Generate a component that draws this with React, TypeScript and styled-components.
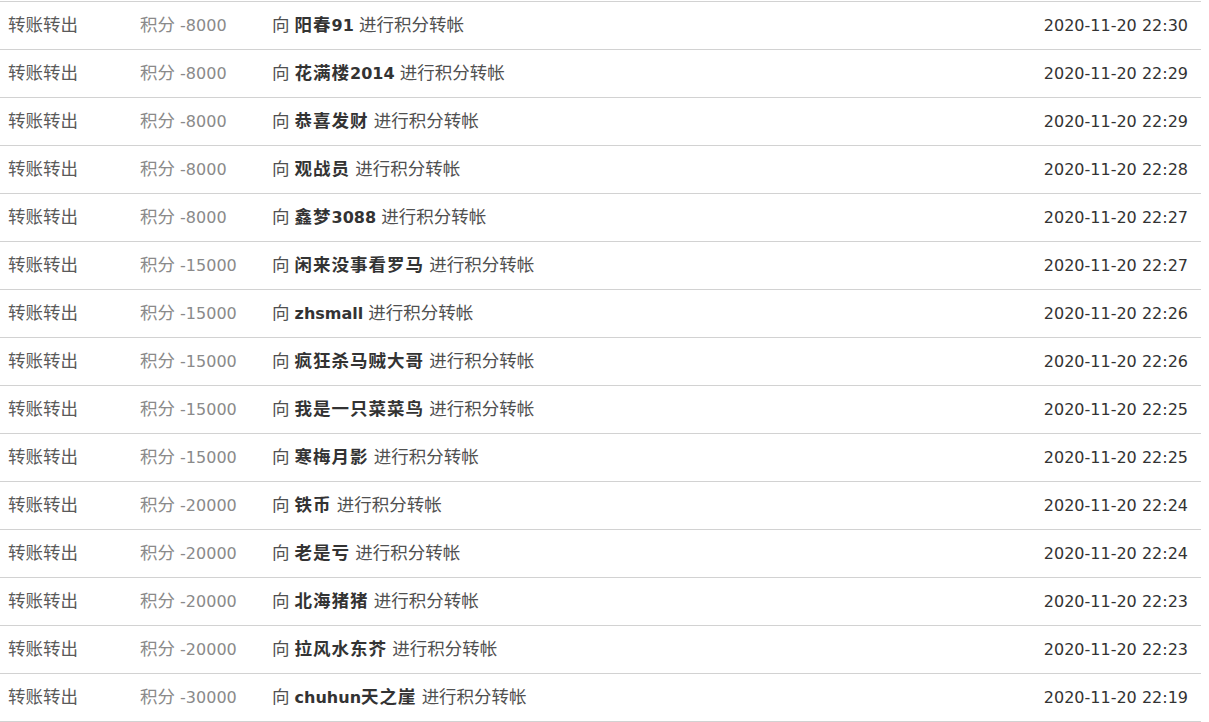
import React from "react";
import styled, { createGlobalStyle } from "styled-components";

interface Transfer {
  amount: number;
  target: string;
  time: string;
}

const transfers: Transfer[] = [
  { amount: 8000, target: "阳春91", time: "2020-11-20 22:30" },
  { amount: 8000, target: "花满楼2014", time: "2020-11-20 22:29" },
  { amount: 8000, target: "恭喜发财", time: "2020-11-20 22:29" },
  { amount: 8000, target: "观战员", time: "2020-11-20 22:28" },
  { amount: 8000, target: "鑫梦3088", time: "2020-11-20 22:27" },
  { amount: 15000, target: "闲来没事看罗马", time: "2020-11-20 22:27" },
  { amount: 15000, target: "zhsmall", time: "2020-11-20 22:26" },
  { amount: 15000, target: "疯狂杀马贼大哥", time: "2020-11-20 22:26" },
  { amount: 15000, target: "我是一只菜菜鸟", time: "2020-11-20 22:25" },
  { amount: 15000, target: "寒梅月影", time: "2020-11-20 22:25" },
  { amount: 20000, target: "铁币", time: "2020-11-20 22:24" },
  { amount: 20000, target: "老是亏", time: "2020-11-20 22:24" },
  { amount: 20000, target: "北海猪猪", time: "2020-11-20 22:23" },
  { amount: 20000, target: "拉风水东芥", time: "2020-11-20 22:23" },
  { amount: 30000, target: "chuhun天之崖", time: "2020-11-20 22:19" },
];

// the chinese glyphs sit a bit larger than the latin ones in the original
function Mixed({ text, wide }: { text: string; wide?: boolean }) {
  const parts = text.match(/[\u3400-\u9fff]+|[^\u3400-\u9fff]+/g) || [];
  return (
    <>
      {parts.map((p, i) =>
        /[\u3400-\u9fff]/.test(p) ? (
          <Han key={i} wide={wide}>
            {p}
          </Han>
        ) : (
          <span key={i}>{p}</span>
        )
      )}
    </>
  );
}

function App() {
  return (
    <>
      <GlobalStyle />
      <List>
        {transfers.map((t, i) => (
          <Row key={i}>
            <Type>
              <Mixed text="转账转出" />
            </Type>
            <Points>
              <Mixed text={`积分 -${t.amount}`} />
            </Points>
            <Desc>
              <Mixed text="向 " />
              <Name>
                <Mixed text={t.target} wide />
              </Name>
              <Mixed text=" 进行积分转帐" />
            </Desc>
            <Time>{t.time}</Time>
          </Row>
        ))}
      </List>
    </>
  );
}

export default App;

const GlobalStyle = createGlobalStyle`
  body {
    margin: 0;
    background: #ffffff;
    font-family: "DejaVu Sans", "Noto Sans CJK SC", sans-serif;
    font-size: 16px;
  }
`;

const List = styled.ul`
  list-style: none;
  margin: 0;
  padding: 1px 0 0 0;
  width: 1201px;
`;

const Row = styled.li`
  display: grid;
  grid-template-columns: 132px 132px 1fr auto;
  align-items: baseline;
  box-sizing: border-box;
  height: 48px;
  padding: 12px 13px 0 8px;
  border-top: 1px solid #d2d2d2;
  line-height: 20px;
  white-space: nowrap;

  &:last-child {
    height: 49px;
    border-bottom: 1px solid #d2d2d2;
  }
`;

const Han = styled.span<{ wide?: boolean }>`
  font-family: "Noto Sans CJK SC", sans-serif;
  font-size: 17.5px;
  letter-spacing: ${(p) => (p.wide ? "1px" : "0")};
`;

const Type = styled.div`
  color: #5a5a5a;
`;

const Points = styled.div`
  color: #8a8a8a;
`;

const Desc = styled.div`
  color: #505050;
`;

const Name = styled.b`
  color: #333333;
  font-weight: 700;
`;

const Time = styled.div`
  color: #333333;
  text-align: right;
`;
